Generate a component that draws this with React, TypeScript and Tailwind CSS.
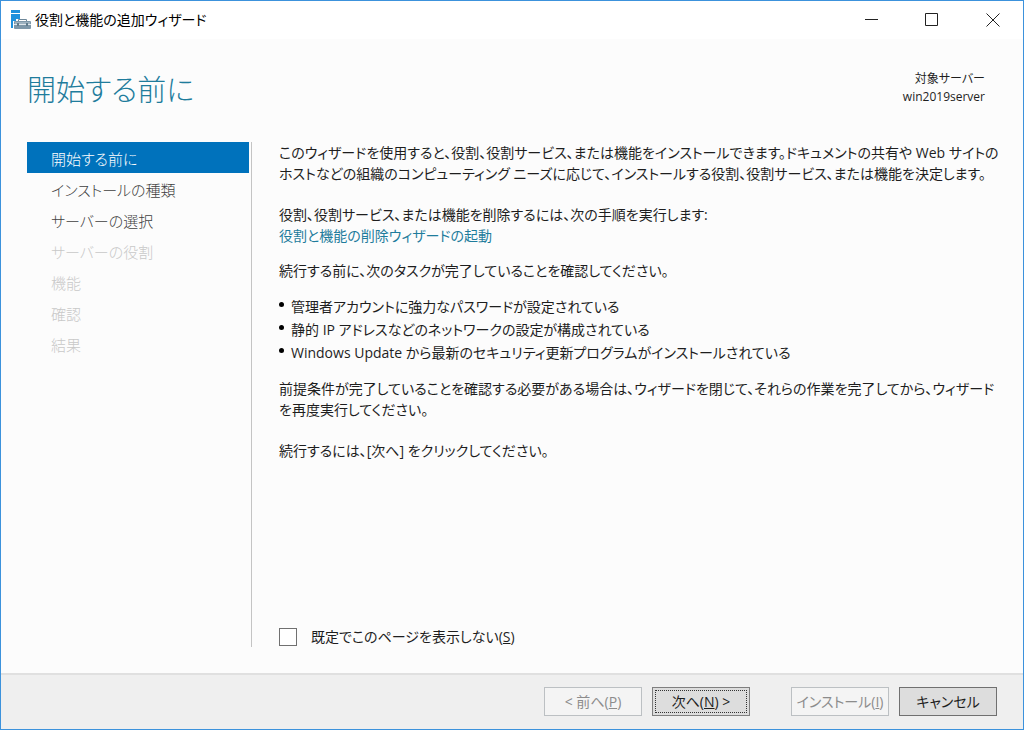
import { useState } from "react";
import type { ReactNode } from "react";

const STEPS = [
  { label: "開始する前に", state: "current" },
  { label: "インストールの種類", state: "open" },
  { label: "サーバーの選択", state: "open" },
  { label: "サーバーの役割", state: "locked" },
  { label: "機能", state: "locked" },
  { label: "確認", state: "locked" },
  { label: "結果", state: "locked" },
];

const TASKS = [
  "管理者アカウントに強力なパスワードが設定されている",
  "静的 IP アドレスなどのネットワークの設定が構成されている",
  "Windows Update から最新のセキュリティ更新プログラムがインストールされている",
];

const stepStyles: Record<string, string> = {
  current: "bg-[#0072bc] text-white",
  open: "text-[#404040]",
  locked: "text-[#c8c8c8]",
};

function ServerManagerIcon() {
  return (
    <svg width="20" height="20" viewBox="0 0 20 20" aria-hidden="true">
      <path d="M0 0h9v3H0zM0 4h9v5H5v2H2v7H0z" fill="#1e90dc" />
      <path d="M7.500 12V9.500h8V12" fill="none" stroke="#6d8799" />
      <rect x="3" y="11" width="17" height="8" rx="1" fill="#7d97a9" />
      <path d="M4 12h15v2H4z" fill="#9db2c0" />
      <path d="M3 14h17v1H3z" fill="#dfe7ec" />
      <path d="M6 13h2v3H6zM15 13h2v3h-2z" fill="#5f7b8c" />
    </svg>
  );
}

function CaptionButton({ label, children }: { label: string; children: ReactNode }) {
  return (
    <button type="button" aria-label={label} className="flex w-[61px] items-center justify-center hover:bg-[#e5e5e5]">
      <svg width="14" height="14" viewBox="0 0 14 14" fill="none" stroke="#222222" aria-hidden="true">
        {children}
      </svg>
    </button>
  );
}

export default function App() {
  const [skip, setSkip] = useState(false);

  return (
    <div className="flex min-h-screen flex-col border border-[#3c92dc] bg-[#fcfcfc] font-['Open_Sans','Noto_Sans_CJK_JP',sans-serif] text-sm text-[#1e1e1e] [font-feature-settings:'palt']">
      {/* Title bar */}
      <div className="flex h-[38px] bg-white">
        <div className="flex flex-1 items-center gap-1 pl-[10px]">
          <ServerManagerIcon />
          <span className="text-black">役割と機能の追加ウィザード</span>
        </div>
        <CaptionButton label="最小化">
          <path d="M1 6.500h13" />
        </CaptionButton>
        <CaptionButton label="最大化">
          <path d="M.5 .5h12v12H.5z" />
        </CaptionButton>
        <CaptionButton label="閉じる">
          <path d="M.5 .5l13 13M13.500 .5l-13 13" />
        </CaptionButton>
      </div>

      {/* Page heading */}
      <header className="flex items-start justify-between pt-[31px] pr-[38px] pb-[30px] pl-[26px]">
        <h1 className="text-[29px] leading-[40px] font-light text-[#1f7c9c]">開始する前に</h1>
        <div className="text-right text-[12px] leading-[18px]">
          <div>対象サーバー</div>
          <div>win2019server</div>
        </div>
      </header>

      {/* Steps + page body */}
      <div className="flex flex-1 pt-[2px] pb-[26px] pl-[26px]">
        <nav className="w-[225px] shrink-0 border-r border-[#c4c4c4] pr-[2px]">
          <ul>
            {STEPS.map((step) => (
              <li
                key={step.label}
                aria-current={step.state === "current" ? "step" : undefined}
                className={`h-[31px] pl-6 text-[15px] leading-[34px] font-light ${stepStyles[step.state]}`}
              >
                {step.label}
              </li>
            ))}
          </ul>
        </nav>

        <main className="flex flex-1 flex-col pr-6 pl-[27px] leading-[21px]">
          <p>
            このウィザードを使用すると、役割、役割サービス、または機能をインストールできます。ドキュメントの共有や Web サイトの
            <br />
            ホストなどの組織のコンピューティング ニーズに応じて、インストールする役割、役割サービス、または機能を決定します。
          </p>
          <p className="mt-5">
            役割、役割サービス、または機能を削除するには、次の手順を実行します:
            <br />
            <a href="#remove" className="text-[#1f7c9c]">
              役割と機能の削除ウィザードの起動
            </a>
          </p>
          <p className="mt-[14px]">続行する前に、次のタスクが完了していることを確認してください。</p>
          <ul className="mt-[14px] leading-[23px]">
            {TASKS.map((task) => (
              <li key={task} className="flex">
                <span className="mt-[7px] mr-[7px] h-[5px] w-[5px] shrink-0 rounded-full bg-black" />
                {task}
              </li>
            ))}
          </ul>
          <p className="mt-[14px]">
            前提条件が完了していることを確認する必要がある場合は、ウィザードを閉じて、それらの作業を完了してから、ウィザード
            <br />
            を再度実行してください。
          </p>
          <p className="mt-5">続行するには、[次へ] をクリックしてください。</p>

          <label className="mt-auto flex items-center gap-[14px]">
            <input
              type="checkbox"
              checked={skip}
              onChange={(e) => setSkip(e.target.checked)}
              className="h-[18px] w-[18px] appearance-none border border-[#707070] bg-white checked:bg-[#0072bc]"
            />
            <span>
              既定でこのページを表示しない(<u>S</u>)
            </span>
          </label>
        </main>
      </div>

      {/* Command bar */}
      <footer className="flex h-[56px] items-start justify-end gap-[10px] border-t-2 border-[#e0e0e0] bg-[#efefef] pt-3 pr-[26px]">
        <button type="button" disabled className="h-[29px] w-[98px] border border-[#bcc0c3] bg-[#f4f4f4] text-[#8c8c8c]">
          &lt; 前へ(<u>P</u>)
        </button>
        <button type="button" className="h-[29px] w-[98px] border border-[#7f7f7f] bg-[#dddddd] p-[2px]">
          <span className="flex h-full items-center justify-center border border-dotted border-[#333333]">
            <span>
              次へ(<u>N</u>) &gt;
            </span>
          </span>
        </button>
        <button type="button" disabled className="ml-[31px] h-[29px] w-[98px] border border-[#bcc0c3] bg-[#f4f4f4] text-[#8c8c8c]">
          インストール(<u>I</u>)
        </button>
        <button type="button" className="h-[29px] w-[98px] border border-[#707070] bg-[#dddddd]">
          キャンセル
        </button>
      </footer>
    </div>
  );
}
